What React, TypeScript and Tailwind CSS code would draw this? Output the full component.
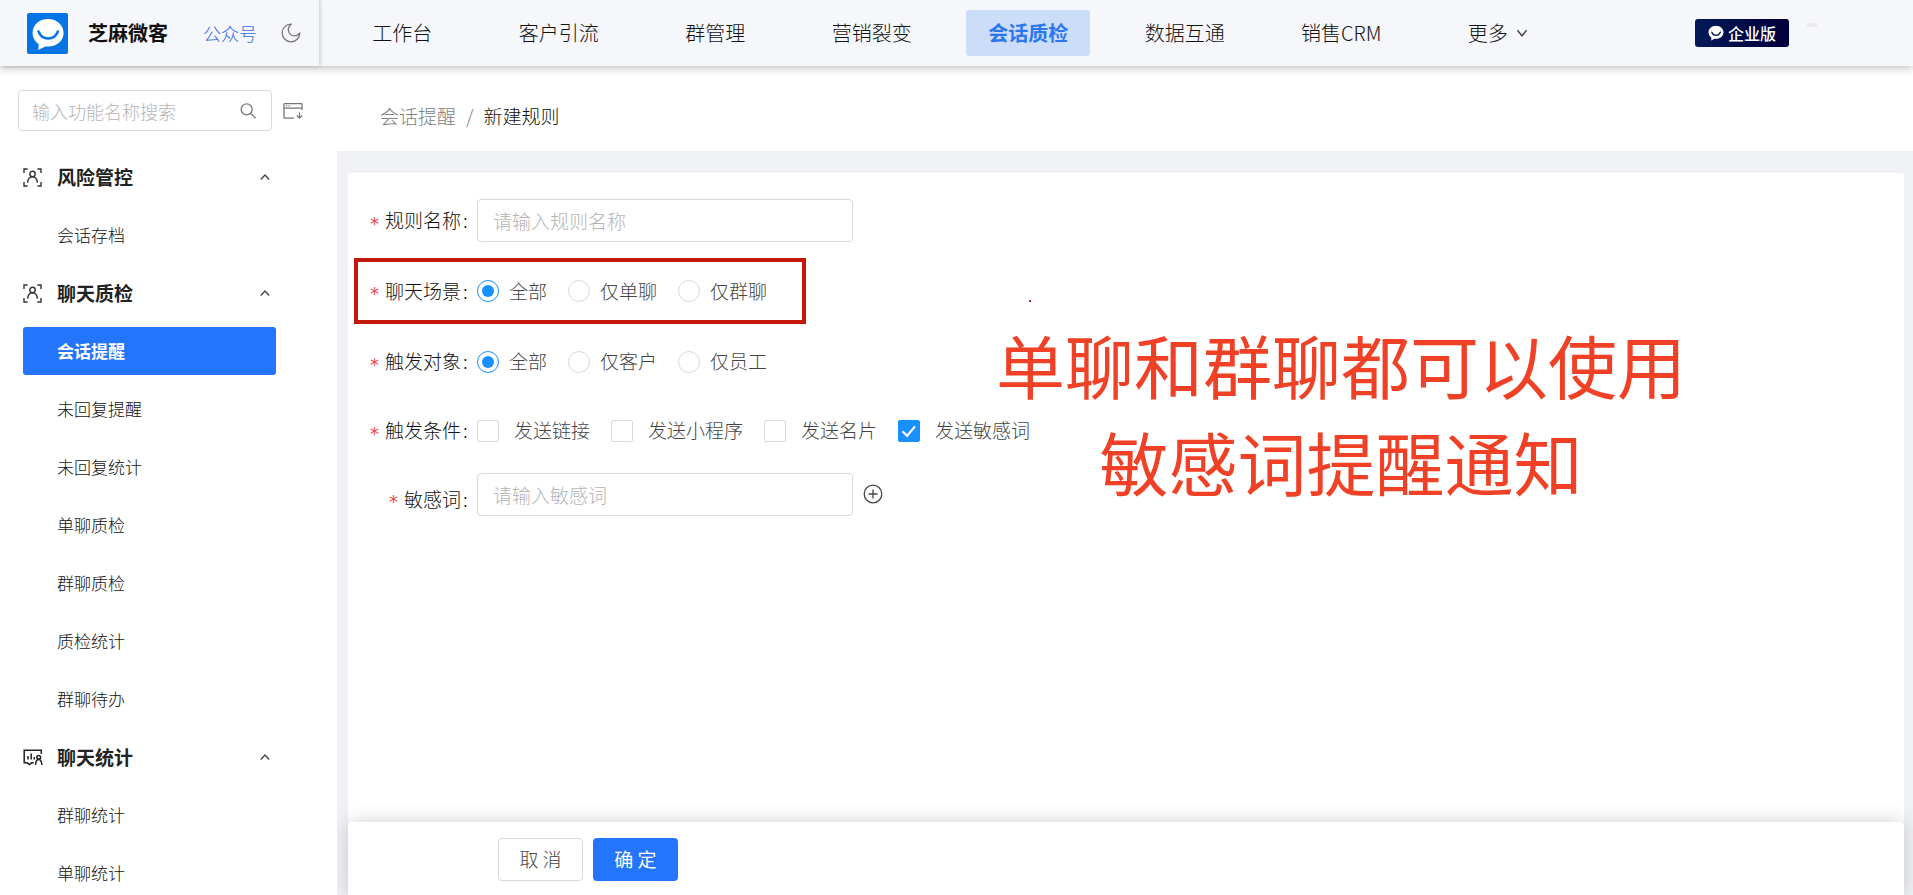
import { useState } from "react";

const navItems = ["工作台", "客户引流", "群管理", "营销裂变", "会话质检", "数据互通", "销售CRM"];

const menu = [
  { title: "风险管控", icon: "scan", items: ["会话存档"] },
  {
    title: "聊天质检",
    icon: "scan",
    items: ["会话提醒", "未回复提醒", "未回复统计", "单聊质检", "群聊质检", "质检统计", "群聊待办"],
  },
  { title: "聊天统计", icon: "stat", items: ["群聊统计", "单聊统计"] },
];

function Logo() {
  return (
    <svg viewBox="0 0 41 41" className="h-[41px] w-[41px]" aria-hidden="true">
      <rect width="41" height="41" rx="2" fill="#0575e6" />
      <path
        d="M21 6C12 6 5.600 12 5.600 20c0 4.600 2.400 8.600 6.200 11.200l-.6 5.800 7-3.600c.9.200 1.800.2 2.800.2 9 0 15.600-5.900 15.600-13.600S30 6 21 6z"
        fill="#fff"
      />
      <path d="M11.500 18.500c1.800 4.600 5.400 7 9.600 7s8-2.400 9.800-7" fill="none" stroke="#0575e6" strokeWidth="2.600" strokeLinecap="round" />
    </svg>
  );
}

function MoonIcon() {
  return (
    <svg viewBox="0 0 20 20" className="h-5 w-5" fill="none" stroke="#777" strokeWidth="1.300" strokeLinejoin="round" aria-hidden="true">
      <path d="M10.300 1.200C5.200 1 1.200 5 1.200 9.900c0 4.900 3.900 8.900 8.800 8.900 4.800 0 8.700-3.800 8.800-8.900-1.200 1.900-3.100 3-5.200 3-3.500 0-6.300-2.700-6.300-6.100 0-2.300 1.200-4.300 3-5.600z" />
    </svg>
  );
}

function SearchIcon() {
  return (
    <svg viewBox="0 0 18 18" className="h-[18px] w-[18px]" fill="none" stroke="#7d7d7d" strokeWidth="1.500" aria-hidden="true">
      <circle cx="7.200" cy="7.200" r="5.900" />
      <path d="M11.400 11.400l5.500 5.500" />
    </svg>
  );
}

function CollapseIcon() {
  return (
    <svg viewBox="0 0 20 18" className="h-[18px] w-5" fill="none" stroke="#777" strokeWidth="1.300" aria-hidden="true">
      <path d="M11 16.200H1.600a.6.600 0 0 1-.6-.6V2.200c0-.4.300-.6.6-.6h16.800c.4 0 .6.200.6.600V8M1 6.200h18" />
      <path d="M3 3.900h1.200M5.600 3.900h1.200" />
      <path d="M16.500 10.500V16M13.800 13.500l2.700 2.600 2.700-2.600" />
    </svg>
  );
}

function MenuIcon({ name }: { name: string }) {
  if (name === "scan") {
    return (
      <svg viewBox="0 0 19 19" className="h-[19px] w-[19px]" fill="none" stroke="#333" strokeWidth="1.400" aria-hidden="true">
        <path d="M1 5V1h3.600M14.400 1H18v4M18 14v4h-3.600M4.600 18H1v-4" />
        <circle cx="9.500" cy="6" r="2.700" />
        <path d="M4.600 14.800c.3-3.600 2-6 4.900-6s4.600 2.400 4.900 6" />
      </svg>
    );
  }
  return (
    <svg viewBox="0 0 20 17" className="h-[17px] w-5" fill="none" stroke="#222" strokeWidth="1.500" aria-hidden="true">
      <path d="M18.300 5V1.200H1.200v12.600h3l2.200 1.800 2.200-1.800h2.200" />
      <path d="M5 7v3.500M8.200 4.500v6M11.200 8v2.500" />
      <circle cx="15.700" cy="8.300" r="1.900" />
      <path d="M12.600 16c.1-3.500 1.200-5.600 3.100-5.600s3 2.100 3.100 5.600" />
    </svg>
  );
}

function Chevron({ up = false }: { up?: boolean }) {
  return (
    <svg viewBox="0 0 12 8" className="h-2 w-3" fill="none" stroke="#444" strokeWidth="1.400" aria-hidden="true">
      <path d={up ? "M1.800 6.500L6 2l4.200 4.500" : "M1.400 1.200L6 6.800l4.600-5.600"} />
    </svg>
  );
}

function Header() {
  return (
    <header className="relative z-20 flex h-[66px] shrink-0 bg-[#f6f7fb] shadow-[0_2px_8px_rgba(0,0,0,0.25)]">
      <div className="flex w-[319px] shrink-0 items-center pl-[27px] shadow-[1px_0_4px_rgba(0,0,0,0.2)]">
        <Logo />
        <span className="ml-5 text-xl font-bold text-[#111]">芝麻微客</span>
        <a href="#" className="ml-[35px] text-lg text-[#2f6fe4]">公众号</a>
        <button type="button" aria-label="切换主题" className="ml-6">
          <MoonIcon />
        </button>
      </div>
      <nav className="ml-[5px] grid flex-1 grid-cols-8 items-center justify-items-center text-xl">
        {navItems.map((item) =>
          item === "会话质检" ? (
            <a key={item} href="#" className="flex h-[46px] items-center rounded-[3px] bg-[#ccddfa] px-[22px] font-bold text-[#2b77f0]">
              {item}
            </a>
          ) : (
            <a key={item} href="#">{item}</a>
          )
        )}
        <button type="button" className="flex items-center gap-2">
          更多
          <Chevron />
        </button>
      </nav>
      <div className="flex w-[337px] shrink-0 items-center pl-[119px]">
        <span className="flex h-7 w-[94px] items-center justify-center gap-1 rounded-[3px] bg-linear-to-r from-[#021a58] to-[#02003a] text-base font-medium text-white">
          <svg viewBox="0 0 16 16" className="h-4 w-4" aria-hidden="true">
            <path d="M8 .8C3.800.8.500 3.700.500 7.300c0 2.100 1.100 4 2.900 5.200l-.2 2.900 3.300-1.600c.5.100 1 .1 1.500.1 4.200 0 7.500-3 7.500-6.600S12.200.8 8 .8z" fill="#fff" />
            <path d="M3.800 7.200c.8 2 2.400 3.100 4.200 3.100s3.500-1.100 4.300-3.100" fill="none" stroke="#021450" strokeWidth="1.300" strokeLinecap="round" />
          </svg>
          企业版
        </span>
        <span className="mb-4 ml-[18px] h-1 w-2.5 bg-[#ebebec]" />
      </div>
    </header>
  );
}

function Sidebar() {
  const [active, setActive] = useState("会话提醒");

  return (
    <aside className="w-[337px] shrink-0 overflow-hidden bg-white pt-6">
      <div className="flex items-center pl-[18px]">
        <label className="flex h-[41px] w-[254px] items-center rounded border border-[#d9d9d9] pl-[13px] pr-3.5">
          <input
            type="text"
            aria-label="功能名称搜索"
            placeholder="输入功能名称搜索"
            className="w-full min-w-0 text-lg outline-none placeholder:text-[#b4b4b4]"
          />
          <SearchIcon />
        </label>
        <button type="button" aria-label="收起菜单" className="ml-[11px]">
          <CollapseIcon />
        </button>
      </div>
      <div className="mt-[22px] flex flex-col gap-2.5 pl-[23px] pr-[61px]">
        {menu.map((group) => (
          <div key={group.title} className="flex flex-col gap-2.5">
            <button type="button" className="flex h-12 w-full items-center pr-[5px] text-[19px] font-bold text-[#222]">
              <span className="w-[34px]">
                <MenuIcon name={group.icon} />
              </span>
              {group.title}
              <span className="ml-auto">
                <Chevron up />
              </span>
            </button>
            {group.items.map((item) => (
              <a
                key={item}
                href="#"
                onClick={() => setActive(item)}
                className={
                  item === active
                    ? "flex h-12 items-center rounded-[3px] bg-[#2475fd] pl-[34px] text-[17px] font-bold text-white"
                    : "flex h-12 items-center pl-[34px] text-[17px]"
                }
              >
                {item}
              </a>
            ))}
          </div>
        ))}
      </div>
    </aside>
  );
}

function RowLabel({ text, htmlFor }: { text: string; htmlFor?: string }) {
  return (
    <label htmlFor={htmlFor} className="flex w-[107px] shrink-0 items-center justify-end">
      <span className="mr-1.5 mt-1.5 font-['DejaVu_Sans',sans-serif] text-lg font-normal leading-none text-[#f0484b]">*</span>
      {text}
      <span className="w-2.5 pl-0.5">:</span>
    </label>
  );
}

function Radio({ name, text, checked }: { name: string; text: string; checked?: boolean }) {
  return (
    <label className="flex items-center gap-2.5 text-[#444]">
      <span className="grid place-items-center">
        <input
          type="radio"
          name={name}
          defaultChecked={checked}
          className="peer col-start-1 row-start-1 h-[22px] w-[22px] appearance-none rounded-full border border-[#d9d9d9] bg-white checked:border-[#1890ff]"
        />
        <span className="pointer-events-none col-start-1 row-start-1 hidden h-3 w-3 rounded-full bg-[#1890ff] peer-checked:block" />
      </span>
      {text}
    </label>
  );
}

function Checkbox({ text, checked }: { text: string; checked?: boolean }) {
  return (
    <label className="flex items-center gap-[15px] text-[#444]">
      <span className="grid place-items-center">
        <input
          type="checkbox"
          defaultChecked={checked}
          className="peer col-start-1 row-start-1 h-[22px] w-[22px] appearance-none rounded-[2px] border border-[#d9d9d9] bg-white checked:border-[#1890ff] checked:bg-[#1890ff]"
        />
        <svg viewBox="0 0 16 14" className="pointer-events-none col-start-1 row-start-1 hidden h-3.5 w-4 peer-checked:block" fill="none" stroke="#fff" strokeWidth="2.200" aria-hidden="true">
          <path d="M1.500 7.200l4.600 4.600L14 2.400" />
        </svg>
      </span>
      {text}
    </label>
  );
}

function RuleForm() {
  return (
    <form className="flex flex-col items-start px-1.5 pt-[26px] text-[19px]">
      <div className="ml-2.5 flex h-[43px] items-center">
        <RowLabel text="规则名称" htmlFor="rule-name" />
        <input
          id="rule-name"
          type="text"
          placeholder="请输入规则名称"
          className="ml-1.5 h-[43px] w-[376px] rounded border border-[#d9d9d9] px-[15px] outline-none placeholder:text-[#b4b4b4]"
        />
      </div>
      <div className="mt-4 flex h-[66px] w-[452px] items-center border-4 border-[#c4170b] pl-1.5">
        <RowLabel text="聊天场景" />
        <div className="ml-1.5 flex gap-[21px]">
          <Radio name="scene" text="全部" checked />
          <Radio name="scene" text="仅单聊" />
          <Radio name="scene" text="仅群聊" />
        </div>
      </div>
      <div className="ml-2.5 mt-4 flex h-[43px] items-center">
        <RowLabel text="触发对象" />
        <div className="ml-1.5 flex gap-[21px]">
          <Radio name="target" text="全部" checked />
          <Radio name="target" text="仅客户" />
          <Radio name="target" text="仅员工" />
        </div>
      </div>
      <div className="ml-2.5 mt-[26px] flex h-[43px] items-center">
        <RowLabel text="触发条件" />
        <div className="ml-1.5 flex gap-[21px]">
          <Checkbox text="发送链接" />
          <Checkbox text="发送小程序" />
          <Checkbox text="发送名片" />
          <Checkbox text="发送敏感词" checked />
        </div>
      </div>
      <div className="ml-2.5 mt-[21px] flex items-start">
        <div className="pt-3">
          <RowLabel text="敏感词" htmlFor="word" />
        </div>
        <input
          id="word"
          type="text"
          placeholder="请输入敏感词"
          className="ml-1.5 h-[43px] w-[376px] rounded border border-[#d9d9d9] px-[15px] outline-none placeholder:text-[#b4b4b4]"
        />
        <button type="button" aria-label="添加敏感词" className="ml-2.5 mt-[11px]">
          <svg viewBox="0 0 20 20" className="h-5 w-5" fill="none" stroke="#444" strokeWidth="1.300" aria-hidden="true">
            <circle cx="10" cy="10" r="8.800" />
            <path d="M10 5.500v9M5.500 10h9" />
          </svg>
        </button>
      </div>
    </form>
  );
}

export default function App() {
  return (
    <div className="flex h-screen flex-col overflow-hidden bg-white font-['Noto_Sans_CJK_SC',sans-serif] font-light text-[#111]">
      <Header />
      <div className="flex min-h-0 flex-1">
        <Sidebar />
        <main className="flex min-w-0 flex-1 flex-col overflow-hidden bg-[#f0f1f5]">
          <div className="flex h-[85px] shrink-0 items-center gap-2.5 bg-white pl-[43px] pt-4 text-[19px]">
            <a href="#" className="text-[#808080]">会话提醒</a>
            <span className="text-[#808080]">/</span>
            <span>新建规则</span>
          </div>
          <section className="relative ml-[11px] mr-[9px] mt-[22px] flex-1 rounded-t-[3px] bg-white">
            <RuleForm />
            <p className="absolute left-[648px] top-[143px] text-center text-[69px] leading-[97px] font-normal text-[#f04126]">
              单聊和群聊都可以使用
              <br />
              敏感词提醒通知
            </p>
            <span className="absolute left-[681px] top-[127px] h-0.5 w-0.5 bg-[#a32020]" />
          </section>
          <footer className="z-10 ml-[11px] mr-[9px] flex h-[73px] shrink-0 items-start gap-2.5 rounded-t-[3px] bg-white pl-[150px] pt-4 text-[19px] shadow-[0_0_20px_rgba(0,0,0,0.18)]">
            <button type="button" className="h-[43px] w-[85px] rounded border border-[#d9d9d9] text-[#444]">
              取 消
            </button>
            <button type="button" className="h-[43px] w-[85px] rounded bg-[#2475fd] font-normal text-white">
              确 定
            </button>
          </footer>
        </main>
      </div>
    </div>
  );
}
